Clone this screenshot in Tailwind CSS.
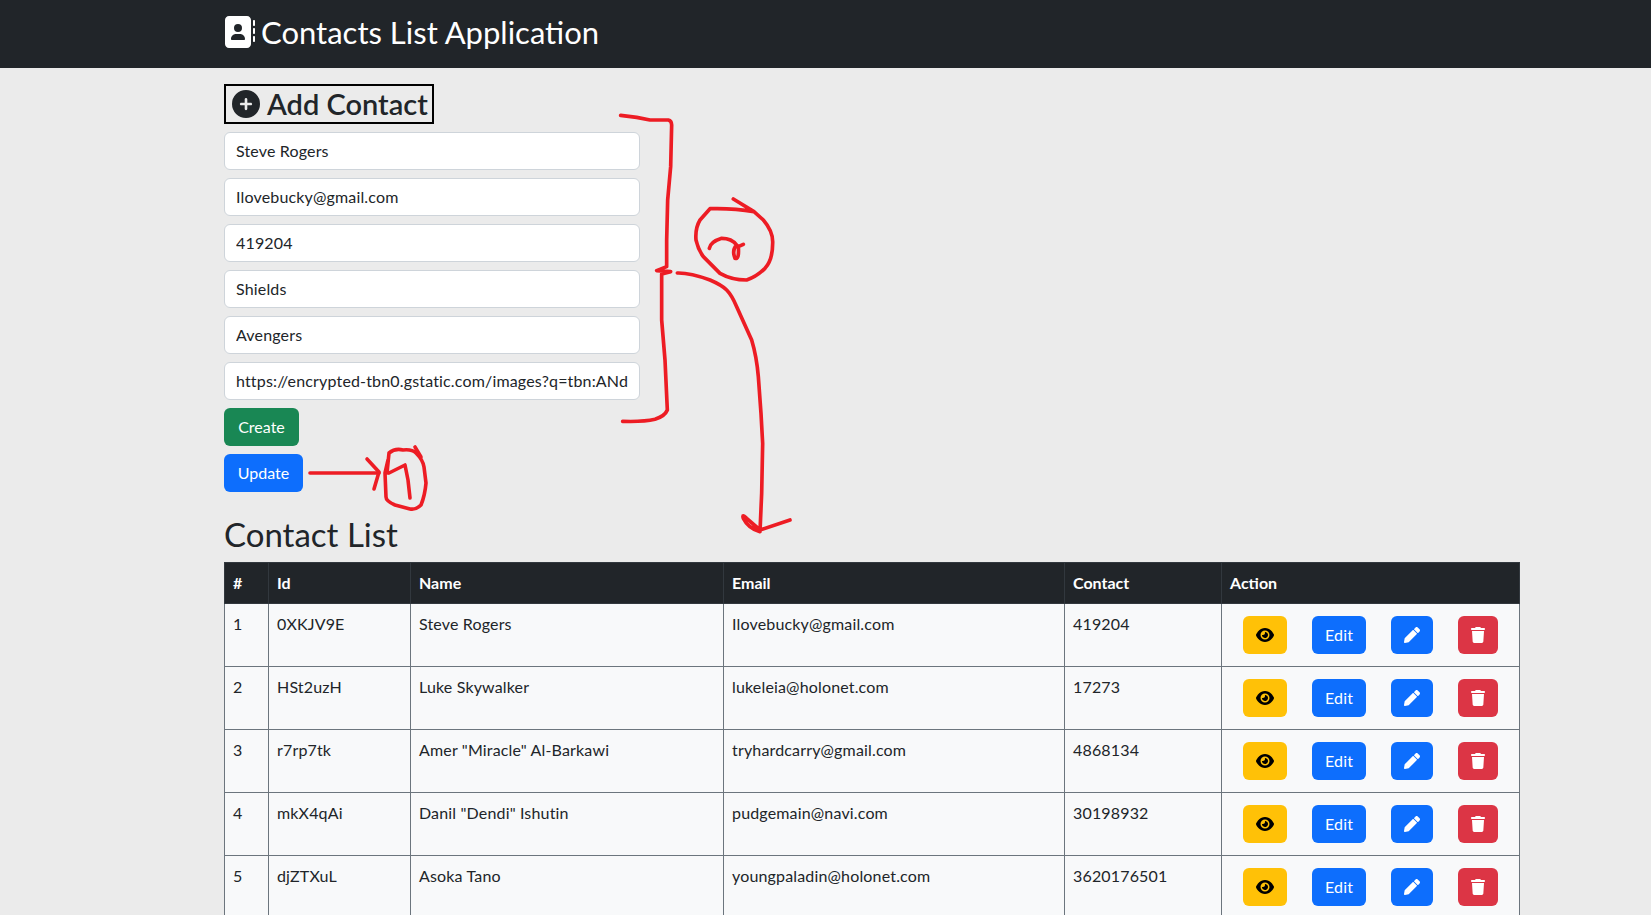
<!DOCTYPE html>
<html lang="en">
<head>
<meta charset="utf-8">
<title>Contacts List Application</title>
<script src="https://cdn.jsdelivr.net/npm/@tailwindcss/browser@4"></script>
</head>
<body class="m-0">
<div class="relative h-screen overflow-hidden bg-[#ebebeb] font-['Lato','Noto_Sans',sans-serif] text-[#212529]">
  <nav class="flex h-[68px] items-center gap-[6px] bg-[#212529] pb-1 pl-[223px] text-white">
    <svg class="h-8 w-8 fill-white" viewBox="0 0 512 512"><path d="M96 0C60.7 0 32 28.7 32 64V448c0 35.3 28.7 64 64 64H384c35.3 0 64-28.7 64-64V64c0-35.3-28.7-64-64-64H96zM208 288h64c44.2 0 80 35.8 80 80c0 8.8-7.2 16-16 16H144c-8.8 0-16-7.2-16-16c0-44.2 35.8-80 80-80zm-32-96a64 64 0 1 1 128 0 64 64 0 1 1 -128 0zM512 80c0-8.8-7.2-16-16-16s-16 7.2-16 16v64c0 8.8 7.2 16 16 16s16-7.2 16-16V80zM496 192c-8.8 0-16 7.2-16 16v64c0 8.8 7.2 16 16 16s16-7.2 16-16V208c0-8.8-7.2-16-16-16zm16 144c0-8.8-7.2-16-16-16s-16 7.2-16 16v64c0 8.8 7.2 16 16 16s16-7.2 16-16V336z"/></svg>
    <span class="text-[31px] leading-none">Contacts List Application</span>
  </nav>

  <main class="ml-[224px] w-[1296px]">
    <h2 class="mt-4 inline-flex h-10 w-[210px] items-center gap-[7px] whitespace-nowrap border-2 border-black pl-[6px] text-[29px] leading-none font-semibold">
      <svg class="h-7 w-7 fill-[#212529]" viewBox="0 0 512 512"><path d="M256 512A256 256 0 1 0 256 0a256 256 0 1 0 0 512zM232 344V280H168c-13.3 0-24-10.7-24-24s10.7-24 24-24h64V168c0-13.3 10.7-24 24-24s24 10.7 24 24v64h64c13.3 0 24 10.7 24 24s-10.7 24-24 24H280v64c0 13.3-10.7 24-24 24s-24-10.7-24-24z"/></svg>
      <span class="pb-[2px]">Add Contact</span>
    </h2>

    <form class="mt-2 flex w-[416px] flex-col items-start gap-2">
      <input class="h-[38px] w-full rounded-md border border-[#ced4da] bg-white px-[11px] pb-[2px] text-[16px] tracking-[0.01em] text-[#212529]" value="Steve Rogers">
      <input class="h-[38px] w-full rounded-md border border-[#ced4da] bg-white px-[11px] pb-[2px] text-[16px] tracking-[0.01em] text-[#212529]" value="Ilovebucky@gmail.com">
      <input class="h-[38px] w-full rounded-md border border-[#ced4da] bg-white px-[11px] pb-[2px] text-[16px] tracking-[0.01em] text-[#212529]" value="419204">
      <input class="h-[38px] w-full rounded-md border border-[#ced4da] bg-white px-[11px] pb-[2px] text-[16px] tracking-[0.01em] text-[#212529]" value="Shields">
      <input class="h-[38px] w-full rounded-md border border-[#ced4da] bg-white px-[11px] pb-[2px] text-[16px] tracking-[0.01em] text-[#212529]" value="Avengers">
      <input class="h-[38px] w-full rounded-md border border-[#ced4da] bg-white px-[11px] pb-[2px] text-[16px] tracking-[0.01em] text-[#212529]" value="https://encrypted-tbn0.gstatic.com/images?q=tbn:ANd9GcQ">
      <button type="button" class="h-[38px] w-[75px] rounded-md bg-[#198754] text-[16px] text-white">Create</button>
      <button type="button" class="h-[38px] w-[79px] rounded-md bg-[#0d6efd] text-[16px] text-white">Update</button>
    </form>

    <h2 class="mt-[21px] h-[49px] text-[33px] leading-[42px]">Contact List</h2>

    <table class="w-[1296px] table-fixed border-collapse border border-[#6c757d] bg-[#f8f9fa] text-[16px] leading-6">
      <colgroup>
        <col class="w-[44px]"><col class="w-[142px]"><col class="w-[313px]"><col class="w-[341px]"><col class="w-[157px]"><col>
      </colgroup>
      <thead class="bg-[#212529] text-left font-bold text-white">
        <tr class="h-[41px]">
          <th class="border border-[#32383e] px-2">#</th>
          <th class="border border-[#32383e] px-2">Id</th>
          <th class="border border-[#32383e] px-2">Name</th>
          <th class="border border-[#32383e] px-2">Email</th>
          <th class="border border-[#32383e] px-2">Contact</th>
          <th class="border border-[#32383e] px-2">Action</th>
        </tr>
      </thead>
      <tbody class="tracking-[0.01em]">
        <tr class="h-[63px]">
          <td class="border border-[#6c757d] p-2 align-top">1</td>
          <td class="border border-[#6c757d] p-2 align-top">0XKJV9E</td>
          <td class="border border-[#6c757d] p-2 align-top">Steve Rogers</td>
          <td class="border border-[#6c757d] p-2 align-top">Ilovebucky@gmail.com</td>
          <td class="border border-[#6c757d] p-2 align-top">419204</td>
          <td class="border border-[#6c757d] py-0 pl-[21px] align-middle">
            <div class="flex items-center">
              <button class="flex h-[38px] w-[44px] items-center justify-center rounded-md bg-[#ffc107]"><svg class="h-4 w-[18px] fill-black" viewBox="0 0 576 512"><path d="M288 32c-80.8 0-145.5 36.8-192.6 80.6C48.6 156 17.3 208 2.5 243.7c-3.3 7.9-3.3 16.7 0 24.6C17.3 304 48.6 356 95.4 399.4C142.5 443.2 207.2 480 288 480s145.5-36.8 192.6-80.6c46.8-43.5 78.1-95.4 93-131.1c3.3-7.9 3.3-16.7 0-24.6c-14.9-35.7-46.2-87.7-93-131.1C433.5 68.8 368.8 32 288 32zM144 256a144 144 0 1 1 288 0 144 144 0 1 1 -288 0zm144-64c0 35.3-28.7 64-64 64c-7.1 0-13.9-1.2-20.3-3.3c-5.5-1.8-11.9 1.6-11.7 7.4c.3 6.9 1.3 13.8 3.2 20.7c13.7 51.2 66.4 81.6 117.6 67.9s81.6-66.4 67.9-117.6c-11.1-41.5-47.8-69.4-88.6-71.1c-5.8-.2-9.2 6.1-7.4 11.7c2.1 6.4 3.3 13.2 3.3 20.3z"/></svg></button>
              <button class="ml-[25px] h-[38px] w-[54px] rounded-md bg-[#0d6efd] text-[16px] text-white">Edit</button>
              <button class="ml-[25px] flex h-[38px] w-[42px] items-center justify-center rounded-md bg-[#0d6efd]"><svg class="h-4 w-4 fill-white" viewBox="0 0 512 512"><path d="M497.9 142.1l-46.1 46.1c-4.7 4.7-12.3 4.7-17 0l-111-111c-4.7-4.7-4.7-12.3 0-17l46.1-46.1c18.7-18.7 49.1-18.7 67.9 0l60.1 60.1c18.8 18.7 18.8 49.1 0 67.9zM284.2 99.8L21.6 362.4.4 483.9c-2.9 16.4 11.4 30.6 27.8 27.8l121.5-21.3 262.6-262.6c4.7-4.7 4.7-12.3 0-17l-111-111c-4.8-4.7-12.4-4.7-17.1 0z"/></svg></button>
              <button class="ml-[25px] flex h-[38px] w-[40px] items-center justify-center rounded-md bg-[#dc3545]"><svg class="h-4 w-[14px] fill-white" viewBox="0 0 448 512"><path d="M135.2 17.7L128 32H32C14.3 32 0 46.3 0 64S14.3 96 32 96H416c17.7 0 32-14.3 32-32s-14.3-32-32-32H320l-7.2-14.3C307.4 6.8 296.3 0 284.2 0H163.8c-12.1 0-23.2 6.8-28.6 17.7zM416 128H32L53.2 467c1.6 25.3 22.6 45 47.9 45H346.9c25.3 0 46.3-19.7 47.9-45L416 128z"/></svg></button>
            </div>
          </td>
        </tr>
        <tr class="h-[63px]">
          <td class="border border-[#6c757d] p-2 align-top">2</td>
          <td class="border border-[#6c757d] p-2 align-top">HSt2uzH</td>
          <td class="border border-[#6c757d] p-2 align-top">Luke Skywalker</td>
          <td class="border border-[#6c757d] p-2 align-top">lukeleia@holonet.com</td>
          <td class="border border-[#6c757d] p-2 align-top">17273</td>
          <td class="border border-[#6c757d] py-0 pl-[21px] align-middle">
            <div class="flex items-center">
              <button class="flex h-[38px] w-[44px] items-center justify-center rounded-md bg-[#ffc107]"><svg class="h-4 w-[18px] fill-black" viewBox="0 0 576 512"><path d="M288 32c-80.8 0-145.5 36.8-192.6 80.6C48.6 156 17.3 208 2.5 243.7c-3.3 7.9-3.3 16.7 0 24.6C17.3 304 48.6 356 95.4 399.4C142.5 443.2 207.2 480 288 480s145.5-36.8 192.6-80.6c46.8-43.5 78.1-95.4 93-131.1c3.3-7.9 3.3-16.7 0-24.6c-14.9-35.7-46.2-87.7-93-131.1C433.5 68.8 368.8 32 288 32zM144 256a144 144 0 1 1 288 0 144 144 0 1 1 -288 0zm144-64c0 35.3-28.7 64-64 64c-7.1 0-13.9-1.2-20.3-3.3c-5.5-1.8-11.9 1.6-11.7 7.4c.3 6.9 1.3 13.8 3.2 20.7c13.7 51.2 66.4 81.6 117.6 67.9s81.6-66.4 67.9-117.6c-11.1-41.5-47.8-69.4-88.6-71.1c-5.8-.2-9.2 6.1-7.4 11.7c2.1 6.4 3.3 13.2 3.3 20.3z"/></svg></button>
              <button class="ml-[25px] h-[38px] w-[54px] rounded-md bg-[#0d6efd] text-[16px] text-white">Edit</button>
              <button class="ml-[25px] flex h-[38px] w-[42px] items-center justify-center rounded-md bg-[#0d6efd]"><svg class="h-4 w-4 fill-white" viewBox="0 0 512 512"><path d="M497.9 142.1l-46.1 46.1c-4.7 4.7-12.3 4.7-17 0l-111-111c-4.7-4.7-4.7-12.3 0-17l46.1-46.1c18.7-18.7 49.1-18.7 67.9 0l60.1 60.1c18.8 18.7 18.8 49.1 0 67.9zM284.2 99.8L21.6 362.4.4 483.9c-2.9 16.4 11.4 30.6 27.8 27.8l121.5-21.3 262.6-262.6c4.7-4.7 4.7-12.3 0-17l-111-111c-4.8-4.7-12.4-4.7-17.1 0z"/></svg></button>
              <button class="ml-[25px] flex h-[38px] w-[40px] items-center justify-center rounded-md bg-[#dc3545]"><svg class="h-4 w-[14px] fill-white" viewBox="0 0 448 512"><path d="M135.2 17.7L128 32H32C14.3 32 0 46.3 0 64S14.3 96 32 96H416c17.7 0 32-14.3 32-32s-14.3-32-32-32H320l-7.2-14.3C307.4 6.8 296.3 0 284.2 0H163.8c-12.1 0-23.2 6.8-28.6 17.7zM416 128H32L53.2 467c1.6 25.3 22.6 45 47.9 45H346.9c25.3 0 46.3-19.7 47.9-45L416 128z"/></svg></button>
            </div>
          </td>
        </tr>
        <tr class="h-[63px]">
          <td class="border border-[#6c757d] p-2 align-top">3</td>
          <td class="border border-[#6c757d] p-2 align-top">r7rp7tk</td>
          <td class="border border-[#6c757d] p-2 align-top">Amer "Miracle" Al-Barkawi</td>
          <td class="border border-[#6c757d] p-2 align-top">tryhardcarry@gmail.com</td>
          <td class="border border-[#6c757d] p-2 align-top">4868134</td>
          <td class="border border-[#6c757d] py-0 pl-[21px] align-middle">
            <div class="flex items-center">
              <button class="flex h-[38px] w-[44px] items-center justify-center rounded-md bg-[#ffc107]"><svg class="h-4 w-[18px] fill-black" viewBox="0 0 576 512"><path d="M288 32c-80.8 0-145.5 36.8-192.6 80.6C48.6 156 17.3 208 2.5 243.7c-3.3 7.9-3.3 16.7 0 24.6C17.3 304 48.6 356 95.4 399.4C142.5 443.2 207.2 480 288 480s145.5-36.8 192.6-80.6c46.8-43.5 78.1-95.4 93-131.1c3.3-7.9 3.3-16.7 0-24.6c-14.9-35.7-46.2-87.7-93-131.1C433.5 68.8 368.8 32 288 32zM144 256a144 144 0 1 1 288 0 144 144 0 1 1 -288 0zm144-64c0 35.3-28.7 64-64 64c-7.1 0-13.9-1.2-20.3-3.3c-5.5-1.8-11.9 1.6-11.7 7.4c.3 6.9 1.3 13.8 3.2 20.7c13.7 51.2 66.4 81.6 117.6 67.9s81.6-66.4 67.9-117.6c-11.1-41.5-47.8-69.4-88.6-71.1c-5.8-.2-9.2 6.1-7.4 11.7c2.1 6.4 3.3 13.2 3.3 20.3z"/></svg></button>
              <button class="ml-[25px] h-[38px] w-[54px] rounded-md bg-[#0d6efd] text-[16px] text-white">Edit</button>
              <button class="ml-[25px] flex h-[38px] w-[42px] items-center justify-center rounded-md bg-[#0d6efd]"><svg class="h-4 w-4 fill-white" viewBox="0 0 512 512"><path d="M497.9 142.1l-46.1 46.1c-4.7 4.7-12.3 4.7-17 0l-111-111c-4.7-4.7-4.7-12.3 0-17l46.1-46.1c18.7-18.7 49.1-18.7 67.9 0l60.1 60.1c18.8 18.7 18.8 49.1 0 67.9zM284.2 99.8L21.6 362.4.4 483.9c-2.9 16.4 11.4 30.6 27.8 27.8l121.5-21.3 262.6-262.6c4.7-4.7 4.7-12.3 0-17l-111-111c-4.8-4.7-12.4-4.7-17.1 0z"/></svg></button>
              <button class="ml-[25px] flex h-[38px] w-[40px] items-center justify-center rounded-md bg-[#dc3545]"><svg class="h-4 w-[14px] fill-white" viewBox="0 0 448 512"><path d="M135.2 17.7L128 32H32C14.3 32 0 46.3 0 64S14.3 96 32 96H416c17.7 0 32-14.3 32-32s-14.3-32-32-32H320l-7.2-14.3C307.4 6.8 296.3 0 284.2 0H163.8c-12.1 0-23.2 6.8-28.6 17.7zM416 128H32L53.2 467c1.6 25.3 22.6 45 47.9 45H346.9c25.3 0 46.3-19.7 47.9-45L416 128z"/></svg></button>
            </div>
          </td>
        </tr>
        <tr class="h-[63px]">
          <td class="border border-[#6c757d] p-2 align-top">4</td>
          <td class="border border-[#6c757d] p-2 align-top">mkX4qAi</td>
          <td class="border border-[#6c757d] p-2 align-top">Danil "Dendi" Ishutin</td>
          <td class="border border-[#6c757d] p-2 align-top">pudgemain@navi.com</td>
          <td class="border border-[#6c757d] p-2 align-top">30198932</td>
          <td class="border border-[#6c757d] py-0 pl-[21px] align-middle">
            <div class="flex items-center">
              <button class="flex h-[38px] w-[44px] items-center justify-center rounded-md bg-[#ffc107]"><svg class="h-4 w-[18px] fill-black" viewBox="0 0 576 512"><path d="M288 32c-80.8 0-145.5 36.8-192.6 80.6C48.6 156 17.3 208 2.5 243.7c-3.3 7.9-3.3 16.7 0 24.6C17.3 304 48.6 356 95.4 399.4C142.5 443.2 207.2 480 288 480s145.5-36.8 192.6-80.6c46.8-43.5 78.1-95.4 93-131.1c3.3-7.9 3.3-16.7 0-24.6c-14.9-35.7-46.2-87.7-93-131.1C433.5 68.8 368.8 32 288 32zM144 256a144 144 0 1 1 288 0 144 144 0 1 1 -288 0zm144-64c0 35.3-28.7 64-64 64c-7.1 0-13.9-1.2-20.3-3.3c-5.5-1.8-11.9 1.6-11.7 7.4c.3 6.9 1.3 13.8 3.2 20.7c13.7 51.2 66.4 81.6 117.6 67.9s81.6-66.4 67.9-117.6c-11.1-41.5-47.8-69.4-88.6-71.1c-5.8-.2-9.2 6.1-7.4 11.7c2.1 6.4 3.3 13.2 3.3 20.3z"/></svg></button>
              <button class="ml-[25px] h-[38px] w-[54px] rounded-md bg-[#0d6efd] text-[16px] text-white">Edit</button>
              <button class="ml-[25px] flex h-[38px] w-[42px] items-center justify-center rounded-md bg-[#0d6efd]"><svg class="h-4 w-4 fill-white" viewBox="0 0 512 512"><path d="M497.9 142.1l-46.1 46.1c-4.7 4.7-12.3 4.7-17 0l-111-111c-4.7-4.7-4.7-12.3 0-17l46.1-46.1c18.7-18.7 49.1-18.7 67.9 0l60.1 60.1c18.8 18.7 18.8 49.1 0 67.9zM284.2 99.8L21.6 362.4.4 483.9c-2.9 16.4 11.4 30.6 27.8 27.8l121.5-21.3 262.6-262.6c4.7-4.7 4.7-12.3 0-17l-111-111c-4.8-4.7-12.4-4.7-17.1 0z"/></svg></button>
              <button class="ml-[25px] flex h-[38px] w-[40px] items-center justify-center rounded-md bg-[#dc3545]"><svg class="h-4 w-[14px] fill-white" viewBox="0 0 448 512"><path d="M135.2 17.7L128 32H32C14.3 32 0 46.3 0 64S14.3 96 32 96H416c17.7 0 32-14.3 32-32s-14.3-32-32-32H320l-7.2-14.3C307.4 6.8 296.3 0 284.2 0H163.8c-12.1 0-23.2 6.8-28.6 17.7zM416 128H32L53.2 467c1.6 25.3 22.6 45 47.9 45H346.9c25.3 0 46.3-19.7 47.9-45L416 128z"/></svg></button>
            </div>
          </td>
        </tr>
        <tr class="h-[63px]">
          <td class="border border-[#6c757d] p-2 align-top">5</td>
          <td class="border border-[#6c757d] p-2 align-top">djZTXuL</td>
          <td class="border border-[#6c757d] p-2 align-top">Asoka Tano</td>
          <td class="border border-[#6c757d] p-2 align-top">youngpaladin@holonet.com</td>
          <td class="border border-[#6c757d] p-2 align-top">3620176501</td>
          <td class="border border-[#6c757d] py-0 pl-[21px] align-middle">
            <div class="flex items-center">
              <button class="flex h-[38px] w-[44px] items-center justify-center rounded-md bg-[#ffc107]"><svg class="h-4 w-[18px] fill-black" viewBox="0 0 576 512"><path d="M288 32c-80.8 0-145.5 36.8-192.6 80.6C48.6 156 17.3 208 2.5 243.7c-3.3 7.9-3.3 16.7 0 24.6C17.3 304 48.6 356 95.4 399.4C142.5 443.2 207.2 480 288 480s145.5-36.8 192.6-80.6c46.8-43.5 78.1-95.4 93-131.1c3.3-7.9 3.3-16.7 0-24.6c-14.9-35.7-46.2-87.7-93-131.1C433.5 68.8 368.8 32 288 32zM144 256a144 144 0 1 1 288 0 144 144 0 1 1 -288 0zm144-64c0 35.3-28.7 64-64 64c-7.1 0-13.9-1.2-20.3-3.3c-5.5-1.8-11.9 1.6-11.7 7.4c.3 6.9 1.3 13.8 3.2 20.7c13.7 51.2 66.4 81.6 117.6 67.9s81.6-66.4 67.9-117.6c-11.1-41.5-47.8-69.4-88.6-71.1c-5.8-.2-9.2 6.1-7.4 11.7c2.1 6.4 3.3 13.2 3.3 20.3z"/></svg></button>
              <button class="ml-[25px] h-[38px] w-[54px] rounded-md bg-[#0d6efd] text-[16px] text-white">Edit</button>
              <button class="ml-[25px] flex h-[38px] w-[42px] items-center justify-center rounded-md bg-[#0d6efd]"><svg class="h-4 w-4 fill-white" viewBox="0 0 512 512"><path d="M497.9 142.1l-46.1 46.1c-4.7 4.7-12.3 4.7-17 0l-111-111c-4.7-4.7-4.7-12.3 0-17l46.1-46.1c18.7-18.7 49.1-18.7 67.9 0l60.1 60.1c18.8 18.7 18.8 49.1 0 67.9zM284.2 99.8L21.6 362.4.4 483.9c-2.9 16.4 11.4 30.6 27.8 27.8l121.5-21.3 262.6-262.6c4.7-4.7 4.7-12.3 0-17l-111-111c-4.8-4.7-12.4-4.7-17.1 0z"/></svg></button>
              <button class="ml-[25px] flex h-[38px] w-[40px] items-center justify-center rounded-md bg-[#dc3545]"><svg class="h-4 w-[14px] fill-white" viewBox="0 0 448 512"><path d="M135.2 17.7L128 32H32C14.3 32 0 46.3 0 64S14.3 96 32 96H416c17.7 0 32-14.3 32-32s-14.3-32-32-32H320l-7.2-14.3C307.4 6.8 296.3 0 284.2 0H163.8c-12.1 0-23.2 6.8-28.6 17.7zM416 128H32L53.2 467c1.6 25.3 22.6 45 47.9 45H346.9c25.3 0 46.3-19.7 47.9-45L416 128z"/></svg></button>
            </div>
          </td>
        </tr>
      </tbody>
    </table>
  </main>

  <svg class="pointer-events-none absolute inset-0 h-[915px] w-[1651px] fill-none stroke-[#ed1c24] [stroke-linecap:round] [stroke-linejoin:round]" viewBox="0 0 1651 915">
    <g transform="translate(600 100) scale(.33333)" stroke-width="11">
      <path d="M62 46 L110 52 L150 60 L205 60 Q215 62 215 75 L212 200 L203 300 L200 420 L200 500 L170 512 L212 515 L185 522 L185 660 L195 780 L202 930 Q195 948 165 958 Q130 966 68 964"/>
      <path d="M400 297 L462 335 Q400 324 330 326 L300 360 Q285 385 288 420 Q295 450 310 470 L360 520 Q395 540 440 540 Q470 530 495 505 Q518 480 518 430 Q520 395 490 360 L462 335"/>
      <path d="M328 445 Q332 425 365 415 Q395 415 410 435 Q395 450 405 475 Q418 480 415 440 L430 433"/>
      <path d="M232 519 Q270 518 330 540 Q365 555 380 570 Q395 585 410 620 L455 720 Q470 770 475 830 L483 940 L488 1030 L485 1180 L480 1295 Q445 1285 430 1255 Q425 1240 440 1255 L480 1290 L570 1260"/>
    </g>
    <g stroke-width="3.6">
      <path d="M310 473 L379 473"/>
      <path d="M367 459 L379 472 L374 489"/>
      <path d="M387 473 L389 453 Q395 448 403 450 Q412 449 416 453 Q423 460 424 467 L426 483 Q425 495 421 505 Q416 510 410 509 L395 505 Q386 501 386 497 L385 473 L388 460"/>
      <path d="M415 447 L421 457"/>
      <path d="M389 473 L405 465 L408 480 L410 498"/>
    </g>
  </svg>
</div>
</body>
</html>
